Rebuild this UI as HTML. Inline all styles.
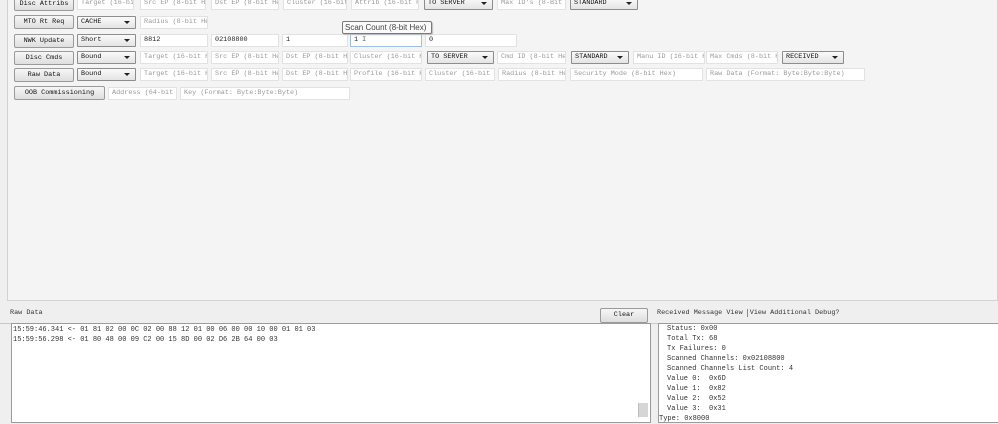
<!DOCTYPE html>
<html><head><style>
*{box-sizing:border-box;margin:0;padding:0}
body{width:998px;height:417px;overflow:hidden;background:#efefef;position:relative;font-family:"Liberation Mono",monospace;font-size:6.8px;color:#222}
.a{position:absolute}
.panel{left:7px;top:-2px;width:991px;height:303px;background:#f4f4f4;border:1px solid #d2d2d2;border-top:none}
.b{position:absolute;height:14px;background:linear-gradient(#f6f6f6,#dedede);border:1px solid #9a9a9a;border-radius:2px;text-align:center;line-height:12px;color:#111}
.i{position:absolute;height:13px;background:#fff;border:1px solid #e2e2e2;line-height:11px;padding-left:3px;color:#9a9a9a;white-space:nowrap;overflow:hidden}
.i.v{color:#222}
.s{position:absolute;height:13px;background:linear-gradient(#fafafa,#e4e4e4);border:1px solid #8d8d8d;border-radius:1px;line-height:11px;padding-left:3px;color:#111;white-space:nowrap}
.s:after{content:"";position:absolute;right:5px;top:4px;border-left:3px solid transparent;border-right:3px solid transparent;border-top:3px solid #222}
.ta{position:absolute;background:#fff;border:1px solid #9c9c9c;font-size:7px;line-height:10px;white-space:pre;color:#333}
</style></head><body>
<div class="a panel"></div>

<div class="b" style="left:14px;top:-3px;width:60px">Disc Attribs</div>
<div class="i" style="left:77px;top:-3px;width:57px">Target (16-bit</div>
<div class="i" style="left:140px;top:-3px;width:66px">Src EP (8-bit He</div>
<div class="i" style="left:211px;top:-3px;width:68px">Dst EP (8-bit He</div>
<div class="i" style="left:283px;top:-3px;width:64px">Cluster (16-bit</div>
<div class="i" style="left:351px;top:-3px;width:68px">Attrib (16-bit H</div>
<div class="s" style="left:424px;top:-3px;width:69px">TO SERVER</div>
<div class="i" style="left:497px;top:-3px;width:69px">Max ID's (8-Bit H</div>
<div class="s" style="left:570px;top:-3px;width:68px">STANDARD</div>

<div class="b" style="left:14px;top:15px;width:60px">MTO Rt Req</div>
<div class="s" style="left:77px;top:16px;width:59px">CACHE</div>
<div class="i" style="left:140px;top:16px;width:68px">Radius (8-bit He</div>

<div class="b" style="left:14px;top:34px;width:60px">NWK Update</div>
<div class="s" style="left:77px;top:34px;width:59px">Short</div>
<div class="i v" style="left:140px;top:34px;width:68px">8812</div>
<div class="i v" style="left:211px;top:34px;width:68px">02108800</div>
<div class="i v" style="left:282px;top:34px;width:66px">1</div>
<div class="i v" style="left:350px;top:34px;width:72px;border-color:#9fc0e0">1 <span style="color:#555">I</span></div>
<div class="i v" style="left:425px;top:34px;width:92px">0</div>
<div class="a" style="left:342px;top:21px;width:90px;height:13px;background:#fafafa;border:1px solid #7a7a7a;border-radius:2px;font-family:'Liberation Sans',sans-serif;font-size:8px;line-height:11px;padding-left:2px;color:#444;box-shadow:1px 1px 1px #bbb">Scan Count (8-bit Hex)</div>

<div class="b" style="left:14px;top:51px;width:60px">Disc Cmds</div>
<div class="s" style="left:77px;top:51px;width:59px">Bound</div>
<div class="i" style="left:140px;top:51px;width:68px">Target (16-bit H</div>
<div class="i" style="left:211px;top:51px;width:68px">Src EP (8-bit He</div>
<div class="i" style="left:282px;top:51px;width:66px">Dst EP (8-bit H</div>
<div class="i" style="left:350px;top:51px;width:72px">Cluster (16-bit H</div>
<div class="s" style="left:427px;top:51px;width:67px">TO SERVER</div>
<div class="i" style="left:497px;top:51px;width:69px">Cmd ID (8-bit He</div>
<div class="s" style="left:571px;top:51px;width:58px">STANDARD</div>
<div class="i" style="left:633px;top:51px;width:72px">Manu ID (16-bit H</div>
<div class="i" style="left:706px;top:51px;width:72px">Max Cmds (8-bit H</div>
<div class="s" style="left:782px;top:51px;width:62px">RECEIVED</div>

<div class="b" style="left:14px;top:68px;width:60px">Raw Data</div>
<div class="s" style="left:77px;top:68px;width:59px">Bound</div>
<div class="i" style="left:140px;top:68px;width:68px">Target (16-bit H</div>
<div class="i" style="left:211px;top:68px;width:68px">Src EP (8-bit He</div>
<div class="i" style="left:282px;top:68px;width:66px">Dst EP (8-bit H</div>
<div class="i" style="left:350px;top:68px;width:72px">Profile (16-bit H</div>
<div class="i" style="left:425px;top:68px;width:70px">Cluster (16-bit</div>
<div class="i" style="left:498px;top:68px;width:68px">Radius (8-bit He</div>
<div class="i" style="left:570px;top:68px;width:133px">Security Mode (8-bit Hex)</div>
<div class="i" style="left:706px;top:68px;width:159px">Raw Data (Format: Byte:Byte:Byte)</div>

<div class="b" style="left:14px;top:86px;width:91px">OOB Commissioning</div>
<div class="i" style="left:108px;top:87px;width:69px">Address (64-bit</div>
<div class="i" style="left:180px;top:87px;width:170px">Key (Format: Byte:Byte:Byte)</div>

<div class="a" style="left:0;top:323px;width:998px;height:1px;background:#c8c8c8"></div>
<div class="a" style="left:10px;top:309px;color:#333">Raw Data</div>
<div class="b" style="left:600px;top:308px;width:48px;height:15px;line-height:13px">Clear</div>
<div class="a" style="left:657px;top:309px;color:#333">Received Message View<span style="border-right:1px solid #888;margin-right:2px">&nbsp;</span>View Additional Debug?</div>

<div class="ta" style="left:11px;top:323px;width:640px;height:100px;padding:1px 1px"
>15:59:46.341 &lt;- 01 81 02 00 0C 02 00 88 12 01 00 06 00 00 10 00 01 01 03
15:59:56.298 &lt;- 01 80 48 00 09 C2 00 15 8D 00 02 D6 2B 64 00 03</div>
<div class="a" style="left:638px;top:403px;width:10px;height:14px;background:#d6d6d6;border-left:1px solid #bbb"></div>

<div class="ta" style="left:658px;top:323px;width:341px;height:100px;padding:0 0 0 8px">Status: 0x00
Total Tx: 68
Tx Failures: 0
Scanned Channels: 0x02108800
Scanned Channels List Count: 4
Value 0:  0x6D
Value 1:  0x82
Value 2:  0x52
Value 3:  0x31
<span style="margin-left:-8px">Type: 0x8000</span></div>
</body></html>
